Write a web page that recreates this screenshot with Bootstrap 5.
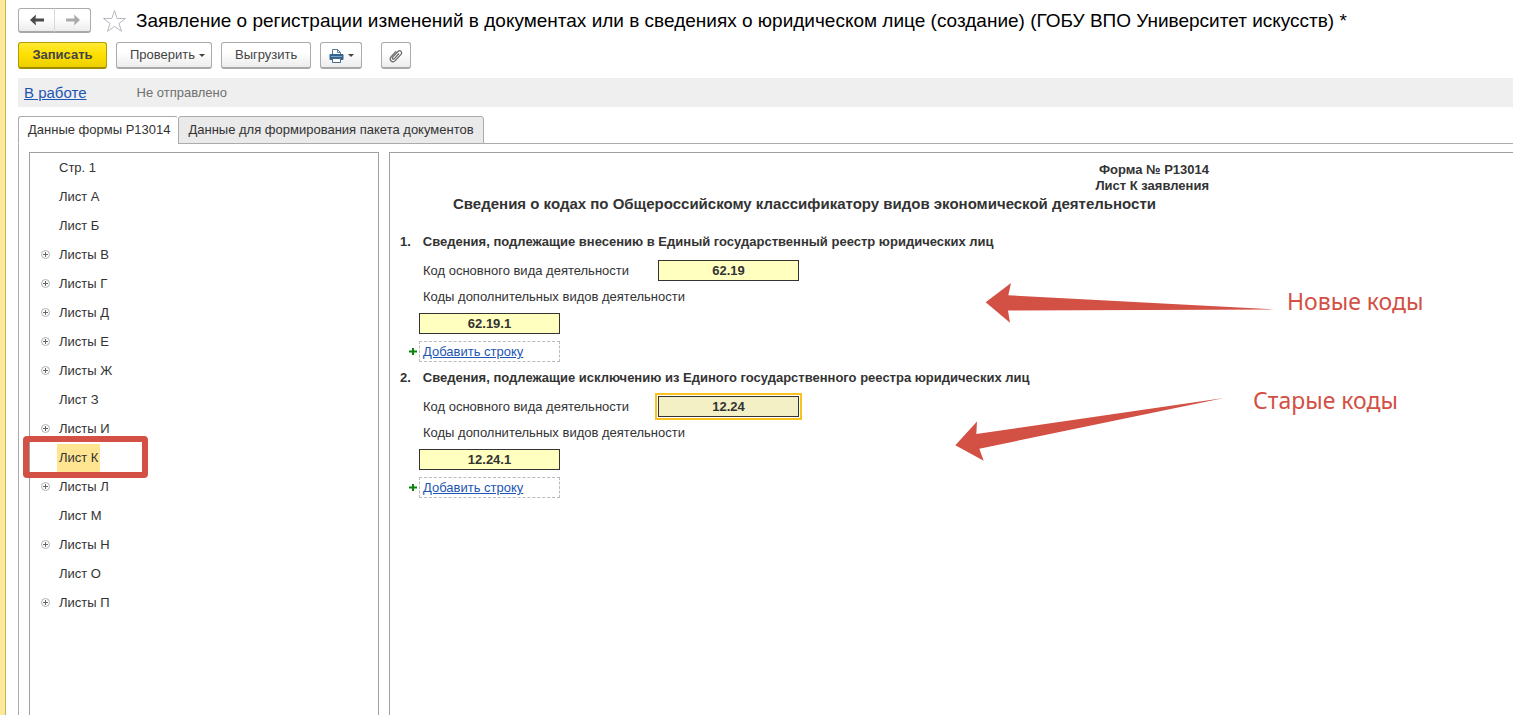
<!DOCTYPE html>
<html lang="ru">
<head>
<meta charset="utf-8">
<meta name="viewport" content="width=device-width, initial-scale=1">
<title>Заявление о регистрации изменений</title>
<link rel="stylesheet" href="https://cdn.jsdelivr.net/npm/bootstrap@5.3.0/dist/css/bootstrap.min.css">
<style>
  body { font: 13px/16px "Liberation Sans", Arial, sans-serif; color: #333; background: #fff; }
  .side-strip { width: 6px; background: #fbea9c; border-right: 1px solid #c4b45c; }
  .page-title { font-size: 19px; line-height: 24px; color: #000; }
  .toolbar-row { padding: 9px 0; gap: 9px; }
  .tool-btn { --bs-btn-font-size: 13px; --bs-btn-line-height: 16px; --bs-btn-padding-y: 0px; --bs-btn-padding-x: 13px;
    --bs-btn-border-radius: 3px; --bs-btn-border-color: #ababab; --bs-btn-color: #444; height: 27px;
    background: linear-gradient(#fff 40%, #ececec); border-bottom: 2px solid #a8a8a8; }
  .tool-btn.dropdown-toggle { padding-right: 6px; }
  .tool-btn.dropdown-toggle::after { border-width: 3px; border-bottom: 0; margin-left: 4px; vertical-align: 2px; }
  .main-btn { min-width: 89px; background: linear-gradient(#ffe934, #fedf00 50%, #eccf00); border-color: #b39d00; border-bottom-color: #a08c00; font-weight: 700; }
  .icon-btn { --bs-btn-padding-x: 7px; }
  .print-btn { min-width: 42px; }
  .attach-btn { margin-left: 10px; }
  .nav-btn { --bs-btn-padding-x: 0px; width: 37px; height: 25px; }
  .nav-btn + .nav-btn { border-left-color: #d8d8d8; }
  .status-bar { background: #efefef; height: 29px; padding-left: 6px; gap: 50px; margin-bottom: 9px; }
  .status-bar a, .add-row a { color: #1d55b3; }
  .status-bar a { font-size: 15px; }
  .status-bar span { color: #707070; }
  .form-tabs { --bs-nav-tabs-border-color: #ababab; --bs-nav-tabs-border-radius: 3px; --bs-nav-link-padding-x: 9px; --bs-nav-link-padding-y: 5px; }
  .form-tabs .nav-link { font-size: 13px; color: #333; border-color: #ababab; background: #eaeaea; }
  .form-tabs .nav-link.active { background: #fff; color: #333; border-color: #ababab transparent #fff #ababab; padding-right: 7px; }
  .form-body { border-left: 1px solid #ababab; padding: 8px 0 0 10px; gap: 10px; }
  .tree-pane { width: 350px; border: 1px solid #a0a0a0; border-bottom: 0; }
  .sheet-pane { border: 1px solid #a0a0a0; border-width: 1px 0 0 1px; padding: 9px 10px; }
  .tree-row { height: 29px; padding-left: 11px; gap: 7px; }
  .tree-mark { width: 9px; height: 9px; padding: 0; border: 0; background: none; display: flex; }
  .tree-row a { color: #333; padding: 0 2px; line-height: 28px; text-decoration: none; }
  .tree-row .chosen { background: #ffe591; }
  .red-frame { position: absolute; left: -7px; top: -7px; width: 125px; height: 42px; border: 6px solid #d25044; border-radius: 4px; pointer-events: none; }
  .sheet { max-width: 809px; }
  .sheet-title { font-size: 15px; line-height: 20px; margin-bottom: 18px; }
  .sect { margin-bottom: 6px; }
  .sect-head { gap: 12px; font-size: 13px; line-height: 20px; margin: 0 0 8px; }
  .sect-grid { display: grid; grid-template-columns: 19px 239px 141px; row-gap: 7px; align-items: center; }
  .sect-grid label { padding-left: 4px; }
  .sect-grid .in-col { grid-column: 2; }
  .sect-grid .sub-label { grid-column: 2 / -1; line-height: 18px; }
  .add-mark { grid-column: 1; }
  .code-box { width: 141px; height: 21px; padding: 0; border: 1px solid #333; background: #ffffc0; color: #333; font-weight: 700; text-align: center; border-radius: 0; }
  .code-box.current { background: #f2f0c4; outline: 2px solid #fac21e; outline-offset: 1px; }
  .add-row { width: 141px; height: 21px; border: 1px dashed #bbb; padding-left: 3px; line-height: 19px; }
  .callout { position: absolute; gap: 11px; color: #d25044; font: 23px/30px "Noto Sans", sans-serif; white-space: nowrap; }
  .callout-new { left: 585px; top: 48px; }
  .callout-old { left: 555px; top: 17px; }
</style>
</head>
<body>
<svg class="d-none">
  <symbol id="plus-round" viewBox="0 0 9 9"><circle cx="4.500" cy="4.500" r="4" fill="none" stroke="#b0b0b0"/><path d="M4.500 2V7M2 4.500H7" stroke="#666"/></symbol>
  <symbol id="plus-green" viewBox="0 0 9 9"><path d="M5 1V8M1 4.500H9" stroke="#0a830a" stroke-width="2"/></symbol>
</svg>
<div class="d-flex min-vh-100 overflow-hidden">
  <div class="side-strip flex-shrink-0"></div>
  <main class="flex-grow-1 d-flex flex-column ps-2 ms-1">
    <header class="d-flex align-items-center pt-2">
      <div class="btn-group flex-shrink-0">
        <button class="btn tool-btn nav-btn" aria-label="Назад"><svg class="d-block mx-auto" width="14" height="12" viewBox="0 0 14 12"><path d="M0 6L6 .5L5.500 4.500H14V7.500H5.500L6 11.500Z" fill="#4a4a4a"/></svg></button>
        <button class="btn tool-btn nav-btn" aria-label="Вперёд"><svg class="d-block mx-auto" width="14" height="12" viewBox="0 0 14 12"><path d="M14 6L8 .5L8.500 4.500H0V7.500H8.500L8 11.500Z" fill="#aaa"/></svg></button>
      </div>
      <svg class="mx-2 flex-shrink-0" width="29" height="24" viewBox="0 0 29 24" fill="none" stroke="#b4b8c0"><path d="M15.500 1.500L18.200 9.500H26.500L20 14.500L22.500 22.300L15.500 17.500L8.500 22.300L11 14.500L4.500 9.500H12.800Z"/></svg>
      <h1 class="page-title m-0 text-nowrap">Заявление о регистрации изменений в документах или в сведениях о юридическом лице (создание) (ГОБУ ВПО Университет искусств) *</h1>
    </header>
    <div class="d-flex toolbar-row">
      <button class="btn tool-btn main-btn">Записать</button>
      <button class="btn tool-btn dropdown-toggle">Проверить</button>
      <button class="btn tool-btn">Выгрузить</button>
      <button class="btn tool-btn icon-btn print-btn dropdown-toggle" aria-label="Печать"><svg width="15" height="14" viewBox="0 0 15 14"><path d="M3.500 6V.5H8.500L11.500 3.500V6" fill="#fff" stroke="#5a7894"/><path d="M8.500 .5V3.500H11.500" fill="none" stroke="#5a7894"/><rect x=".5" y="5" width="14" height="6" rx="1" fill="#34648e"/><path d="M2 7.500H13" stroke="#7fa3c4"/><path d="M3.500 9.500H11.500V13.500H3.500Z" fill="#fff" stroke="#44698c"/></svg></button>
      <button class="btn tool-btn icon-btn attach-btn" aria-label="Вложения"><svg width="14" height="14" viewBox="0 0 14 14" fill="none" stroke="#666" stroke-width="1.200"><path d="M10 4.500L5.300 9.800Q4.300 10.600 3.600 9.900T3.700 8.200L9 2.500Q10.700 1 12 2.300T12 5.300L6.200 11.600Q4 13.800 2.100 12T2 7.800L7.200 2.200"/></svg></button>
    </div>
    <div class="status-bar d-flex align-items-center">
      <a href="#">В работе</a><span>Не отправлено</span>
    </div>
    <ul class="nav nav-tabs form-tabs">
      <li class="nav-item"><a class="nav-link active" href="#">Данные формы Р13014</a></li>
      <li class="nav-item"><a class="nav-link" href="#">Данные для формирования пакета документов</a></li>
    </ul>
    <div class="form-body d-flex flex-grow-1">
      <nav class="tree-pane flex-shrink-0">
        <div class="tree-row d-flex align-items-center"><span class="tree-mark"></span><a href="#">Стр. 1</a></div>
        <div class="tree-row d-flex align-items-center"><span class="tree-mark"></span><a href="#">Лист А</a></div>
        <div class="tree-row d-flex align-items-center"><span class="tree-mark"></span><a href="#">Лист Б</a></div>
        <div class="tree-row d-flex align-items-center"><button class="tree-mark" aria-label="Развернуть"><svg width="9" height="9"><use href="#plus-round"/></svg></button><a href="#">Листы В</a></div>
        <div class="tree-row d-flex align-items-center"><button class="tree-mark" aria-label="Развернуть"><svg width="9" height="9"><use href="#plus-round"/></svg></button><a href="#">Листы Г</a></div>
        <div class="tree-row d-flex align-items-center"><button class="tree-mark" aria-label="Развернуть"><svg width="9" height="9"><use href="#plus-round"/></svg></button><a href="#">Листы Д</a></div>
        <div class="tree-row d-flex align-items-center"><button class="tree-mark" aria-label="Развернуть"><svg width="9" height="9"><use href="#plus-round"/></svg></button><a href="#">Листы Е</a></div>
        <div class="tree-row d-flex align-items-center"><button class="tree-mark" aria-label="Развернуть"><svg width="9" height="9"><use href="#plus-round"/></svg></button><a href="#">Листы Ж</a></div>
        <div class="tree-row d-flex align-items-center"><span class="tree-mark"></span><a href="#">Лист З</a></div>
        <div class="tree-row d-flex align-items-center"><button class="tree-mark" aria-label="Развернуть"><svg width="9" height="9"><use href="#plus-round"/></svg></button><a href="#">Листы И</a></div>
        <div class="tree-row d-flex align-items-center position-relative"><span class="tree-mark"></span><a class="chosen" href="#">Лист К</a><div class="red-frame"></div></div>
        <div class="tree-row d-flex align-items-center"><button class="tree-mark" aria-label="Развернуть"><svg width="9" height="9"><use href="#plus-round"/></svg></button><a href="#">Листы Л</a></div>
        <div class="tree-row d-flex align-items-center"><span class="tree-mark"></span><a href="#">Лист М</a></div>
        <div class="tree-row d-flex align-items-center"><button class="tree-mark" aria-label="Развернуть"><svg width="9" height="9"><use href="#plus-round"/></svg></button><a href="#">Листы Н</a></div>
        <div class="tree-row d-flex align-items-center"><span class="tree-mark"></span><a href="#">Лист О</a></div>
        <div class="tree-row d-flex align-items-center"><button class="tree-mark" aria-label="Развернуть"><svg width="9" height="9"><use href="#plus-round"/></svg></button><a href="#">Листы П</a></div>
      </nav>
      <section class="sheet-pane flex-grow-1">
        <div class="sheet">
          <div class="text-end fw-bold">Форма № Р13014<br>Лист К заявления</div>
          <h2 class="sheet-title fw-bold text-center text-nowrap">Сведения о кодах по Общероссийскому классификатору видов экономической деятельности</h2>
        </div>
        <div class="sect position-relative">
          <h3 class="sect-head d-flex fw-bold text-nowrap"><span>1.</span><span>Сведения, подлежащие внесению в Единый государственный реестр юридических лиц</span></h3>
          <div class="sect-grid">
            <label class="in-col" for="new-main">Код основного вида деятельности</label>
            <input class="code-box" id="new-main" value="62.19">
            <label class="sub-label" for="new-extra">Коды дополнительных видов деятельности</label>
            <input class="code-box in-col" id="new-extra" value="62.19.1">
            <svg class="add-mark ms-2" width="9" height="9"><use href="#plus-green"/></svg>
            <div class="add-row"><a href="#">Добавить строку</a></div>
          </div>
          <div class="callout callout-new d-flex align-items-center">
            <svg width="291" height="42" viewBox="985 280 291 42" overflow="visible" fill="currentColor"><path d="M985.700 302.300L1011 283L1008.300 295.300L1275 309.500L1008 310.500L1010 322.700Z"/></svg>
            <span>Новые коды</span>
          </div>
        </div>
        <div class="sect position-relative">
          <h3 class="sect-head d-flex fw-bold text-nowrap"><span>2.</span><span>Сведения, подлежащие исключению из Единого государственного реестра юридических лиц</span></h3>
          <div class="sect-grid">
            <label class="in-col" for="old-main">Код основного вида деятельности</label>
            <input class="code-box current" id="old-main" value="12.24">
            <label class="sub-label" for="old-extra">Коды дополнительных видов деятельности</label>
            <input class="code-box in-col" id="old-extra" value="12.24.1">
            <svg class="add-mark ms-2" width="9" height="9"><use href="#plus-green"/></svg>
            <div class="add-row"><a href="#">Добавить строку</a></div>
          </div>
          <div class="callout callout-old d-flex align-items-start">
            <svg width="287" height="78" viewBox="955 385 287 78" fill="currentColor"><path d="M955.300 445.300L977 421.500L976.300 434L1224 398L979.300 448.700L983.700 460.700Z"/></svg>
            <span>Старые коды</span>
          </div>
        </div>
      </section>
    </div>
  </main>
</div>
<script src="https://cdn.jsdelivr.net/npm/bootstrap@5.3.0/dist/js/bootstrap.bundle.min.js"></script>
</body>
</html>
